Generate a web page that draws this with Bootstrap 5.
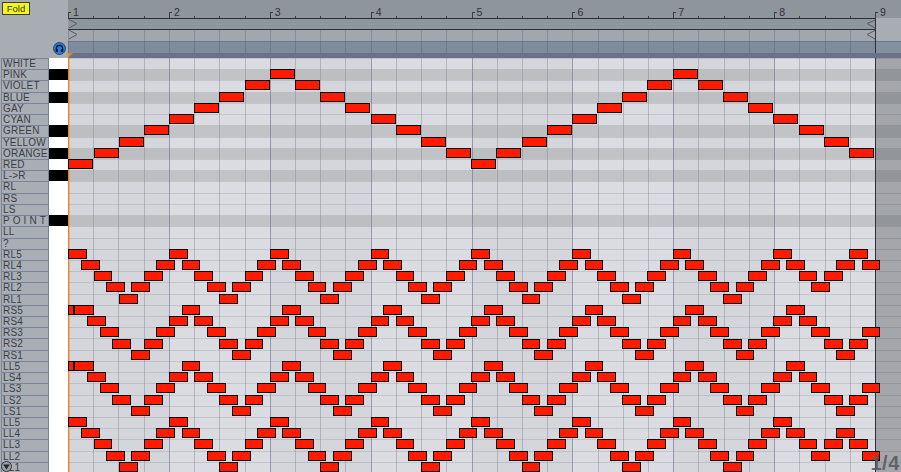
<!DOCTYPE html>
<html lang="en">
<head>
    <meta charset="UTF-8">
    <title>MIDI Clip</title>
    <link href="https://cdn.jsdelivr.net/npm/bootstrap@5.3.0/dist/css/bootstrap.min.css" rel="stylesheet">
    <style>
        html, body { margin: 0; overflow: hidden; background: #a8adb3; }
        .roll { width: 901px; height: 472px; overflow: hidden; font-family: "Liberation Sans", Arial, sans-serif; color: #3a3f46; }

        /* header */
        .hdr { height: 58px; }
        .hdr-left { width: 68px; background: #a8adb3; }
        .fold-btn { width: 28px; height: 13px; margin: 2px 0 0 2px; padding: 0; border: 1px solid #3a3f30; border-radius: 0; background: #f6f61e; color: #33352a; font-size: 9.5px; line-height: 11px; }
        .phones { width: 13px; height: 13px; margin: 0 2px 3px 0; }
        .hdr-right { width: 833px; }
        .ruler { height: 18px; background: #8e959b; }
        .rcell { width: 25.22px; position: relative; font-size: 10.5px; line-height: 11px; padding: 7px 0 0 5px; color: #2f3338; }
        .rcell::before { content: ""; position: absolute; left: 0; bottom: 0; width: 1px; height: 2px; background: #3a3f46; }
        .rbar::before { height: 6px; }
        .rbar::after { content: ""; position: absolute; left: 0; bottom: 5px; width: 3px; height: 1px; background: #3a3f46; }
        .trk1 { height: 11px; background: #8e969e; border-top: 1px solid #2b303a; }
        .trk2 { height: 12px; background: #a2a7ad; border-top: 1px solid #2b303a; }
        .trk3 { height: 12px; background: #808b9b; border-top: 1px solid #6c7690; }
        .band { height: 5px; background: #6a7289; }
        .hdr-end { left: 807px; top: 18px; width: 26px; border-left: 1px solid #2b303a; }
        .hdr-end-a { height: 23px; background: #a8adb3; }
        .hdr-end-b { height: 12px; background: #84909f; border-top: 1px solid #6c7690; }
        .hdr-grid { left: 0; top: 29px; width: 807px; height: 24px; }
        .locators { left: 0; top: 18px; width: 810px; height: 24px; }
        .play-flag { left: 0; top: 53px; width: 5px; height: 5px; }

        /* rows */
        .rowstack { display: grid; grid-template-rows: repeat(37, 11.22px); }
        .keys { width: 68px; flex: none; background: #a8adb3; }
        .keyrow { display: flex; min-height: 0; }
        .keyname { width: 48px; margin-left: 1px; border-left: 1px solid #7a8398; border-right: 1px solid #7a8398; border-top: 1px solid #7a8398; padding-left: 1px; font-size: 10px; line-height: 10px; letter-spacing: .2px; white-space: nowrap; overflow: hidden; background: #a9aeb4; }
        .keycap { width: 19px; background: #fff; }
        .keycap.is-black { background: #000; }
        .lanes { width: 833px; position: relative; }
        .lane { background: #dadce1; border-top: 1px solid #c2c5cb; min-height: 0; }
        .lane.is-black { background: #c1c3c7; border-top-color: #c1c3c7; }
        .beatgrid { position: absolute; display: flex; }
        .lanes .beatgrid { left: 0; top: 0; bottom: 0; width: 807px; }
        .beat { width: 25.22px; border-left: 1px solid rgba(120, 125, 140, .4); }
        .beat.bar { border-left-color: rgba(105, 112, 140, .6); }
        .beat.shade { background: rgba(0, 0, 0, .025); }
        .hdr-grid .beat { border-left-color: rgba(70, 78, 90, .28); }
        .lane-end { position: absolute; left: 807px; top: 0; bottom: 0; right: 0; background: rgba(40, 42, 45, .3); border-left: 1px solid #2b303a; }
        .playhead { position: absolute; left: 0; top: 0; bottom: 0; width: 1px; background: #f0801c; box-shadow: 1px 0 0 rgba(240, 128, 28, .35); }
        .pnote { position: absolute; height: 10px; background: #ff1a00; border: 1px solid #000; }
        .zoom-label { position: absolute; right: 1px; bottom: 2px; font-size: 20px; font-weight: 700; line-height: 16px; letter-spacing: .6px; color: rgba(85, 90, 95, .88); }
        .scroll-down { position: absolute; left: 1px; top: 461px; width: 11px; height: 11px; }
    </style>
</head>
<body>
    <div class="roll position-relative">
        <!-- Header -->
        <div class="hdr d-flex">
            <div class="hdr-left d-flex flex-column justify-content-between">
                <button class="btn fold-btn" type="button">Fold</button>
                <svg class="phones align-self-end" viewBox="0 0 13 13">
                    <circle cx="6.5" cy="6.5" r="6" fill="#2478d8" stroke="#33465f"/>
                    <path d="M3.4 8V6.4a3.1 3.1 0 0 1 6.2 0V8" fill="none" stroke="#0a1420" stroke-width="1.2"/>
                    <rect x="2.8" y="7" width="2" height="3" fill="#0a1420"/>
                    <rect x="8.2" y="7" width="2" height="3" fill="#0a1420"/>
                </svg>
            </div>
            <div class="hdr-right position-relative">
                <div class="ruler d-flex" id="ruler"></div>
                <div class="trk1"></div>
                <div class="trk2"></div>
                <div class="trk3"></div>
                <div class="band"></div>
                <div class="beatgrid hdr-grid" id="hdrGrid"></div>
                <div class="hdr-end position-absolute">
                    <div class="hdr-end-a"></div>
                    <div class="hdr-end-b"></div>
                </div>
                <svg class="locators position-absolute" viewBox="0 0 810 24">
                    <path d="M1 1.5L9 5.5L1 10M1 12L9 16.5L1 21M807 2L799 5.5L807 10M807 12.5L799 16.5L807 21" fill="none" stroke="#555c64"/>
                </svg>
                <svg class="play-flag position-absolute" viewBox="0 0 5 5"><path d="M0 0H5L0 5Z" fill="#f0801c"/></svg>
            </div>
        </div>

        <!-- Piano roll -->
        <div class="d-flex">
            <div class="keys rowstack" id="keys"></div>
            <div class="lanes rowstack" id="lanes"></div>
        </div>

        <svg class="scroll-down" viewBox="0 0 11 11">
            <circle cx="5.5" cy="5.5" r="5" fill="#9aa0a6" stroke="#33383f"/>
            <path d="M2.2 3.6H8.8L5.5 8.4Z" fill="#22262b"/>
        </svg>
    </div>

    <script src="https://cdn.jsdelivr.net/npm/bootstrap@5.3.0/dist/js/bootstrap.bundle.min.js"></script>
    <script>
        const names = ["WHITE", "PINK", "VIOLET", "BLUE", "GAY", "CYAN", "GREEN", "YELLOW", "ORANGE", "RED", "L->R",
            "RL", "RS", "LS", "P O I N T", "LL", "?",
            "RL5", "RL4", "RL3", "RL2", "RL1", "RS5", "RS4", "RS3", "RS2", "RS1",
            "LL5", "LS4", "LS3", "LS2", "LS1", "LL5", "LL4", "LL3", "LL2", "LL1"];
        const blackRows = [1, 3, 6, 8, 10, 14];
        const rowH = 11.22, eighth = 12.59, quarter = 25.18, x0 = 0.3;

        const keys = document.getElementById("keys");
        const lanes = document.getElementById("lanes");

        names.forEach((name, i) => {
            const black = blackRows.includes(i) ? " is-black" : "";
            const label = name.replace("->", "-&gt;");
            keys.innerHTML += `<div class="keyrow"><div class="keyname">${label}</div><div class="keycap${black}"></div></div>`;
            lanes.innerHTML += `<div class="lane${black}"></div>`;
        });

        // bars and beats
        let cells = "";
        for (let b = 0; b < 32; b++) {
            const isBar = b % 4 === 0;
            const shade = Math.floor(b / 4) % 2 === 0 ? " shade" : "";
            cells += `<div class="beat${isBar ? " bar" : ""}${shade}"></div>`;
        }
        document.getElementById("hdrGrid").innerHTML = cells.replaceAll(" shade", "");

        let ruler = "";
        for (let b = 0; b <= 32; b++) {
            const isBar = b % 4 === 0;
            ruler += `<div class="rcell${isBar ? " rbar" : ""}">${isBar ? b / 4 + 1 : ""}</div>`;
        }
        document.getElementById("ruler").innerHTML = ruler;

        lanes.insertAdjacentHTML("beforeend",
            `<div class="beatgrid">${cells}</div><div class="lane-end"></div><div class="playhead"></div>`);

        function addNote(row, x, w) {
            const top = Math.round(row * rowH);
            lanes.insertAdjacentHTML("beforeend",
                `<div class="pnote" style="left:${x.toFixed(1)}px;top:${top}px;width:${w}px"></div>`);
        }

        function tri(k) {
            const p = k % 8;
            return p <= 4 ? p : 8 - p;
        }

        // colour zigzag
        for (let b = 0; b < 32; b++) {
            const p = b % 16;
            addNote(p <= 8 ? 9 - p : 9 - (16 - p), x0 + quarter * b, 25);
        }

        // RL and LL groups, each with its own ending
        const endings = [[17, [2, 1, 0, 1]], [32, [2, 1, 2, 3]]];
        endings.forEach(([base, tail]) => {
            for (let k = 0; k < 64; k++) {
                const step = k < 60 ? tri(k) : tail[k - 60];
                addNote(base + step, x0 + eighth * k, 18.9);
            }
        });

        // RS and LS groups start half a step early
        [22, 27].forEach(base => {
            addNote(base, x0, 5.6);
            addNote(base, 6, 19.6);
            for (let k = 2; k < 64; k++) {
                const shift = k <= 4 ? -6.3 : 0;
                addNote(base + tri(k - 1), x0 + eighth * k + shift, 18.9);
            }
        });

        lanes.insertAdjacentHTML("beforeend", `<div class="zoom-label">1/4</div>`);
    </script>
</body>
</html>
